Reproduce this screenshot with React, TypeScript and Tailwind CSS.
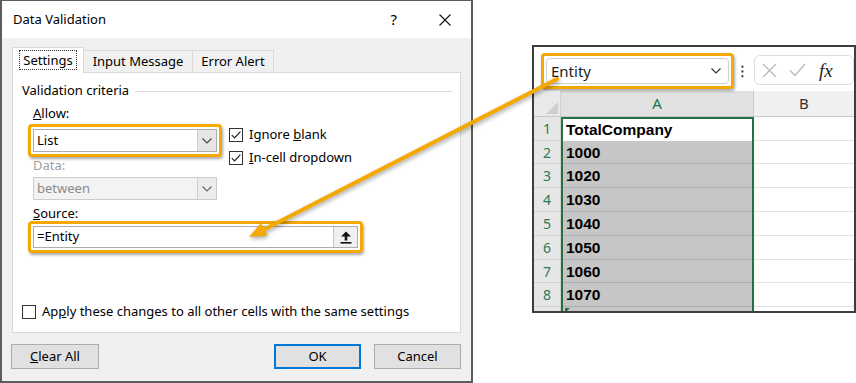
import React from "react";

const dlgFont = { fontFamily: "'Noto Sans', 'Open Sans', sans-serif" };

function Chevron({ color = "#444" }: { color?: string }) {
  return (
    <svg width="10" height="6" viewBox="0 0 10 6">
      <path d="M0.5 0.5 L5 5 L9.5 0.5" fill="none" stroke={color} strokeWidth="1.1" />
    </svg>
  );
}

function Check({ checked }: { checked: boolean }) {
  return (
    <span className="w-[14px] h-[14px] border border-[#333] bg-white flex items-center justify-center shrink-0">
      {checked && (
        <svg width="12" height="12" viewBox="0 0 12 12">
          <path d="M1.8 6.2 L4.6 9 L10.4 2.6" fill="none" stroke="#222" strokeWidth="1.2" />
        </svg>
      )}
    </span>
  );
}

function Highlight() {
  return (
    <span className="absolute -inset-[5px] rounded-[4px] border-[3px] border-[#f5a800] shadow-[1px_2px_3px_rgba(0,0,0,0.35)] pointer-events-none" />
  );
}

function Dialog() {
  return (
    <div
      className="w-[473px] h-[383px] shrink-0 flex flex-col border-t border-x-2 border-b-2 border-[#5c5c5c] bg-white text-[13px] text-black"
      style={dlgFont}
    >
      {/* title bar */}
      <div className="h-[37px] flex items-center pl-[11px] pr-[20px] bg-white">
        <span className="text-[13px]">Data Validation</span>
        <span className="ml-auto text-[15px] leading-none">?</span>
        <svg className="ml-[42px]" width="12" height="12" viewBox="0 0 12 12">
          <path d="M0.5 0.5 L11.5 11.5 M11.5 0.5 L0.5 11.5" stroke="#111" strokeWidth="1.1" />
        </svg>
      </div>
      {/* body */}
      <div className="flex-1 bg-[#f0f0f0] px-[10px] pt-[9px] flex flex-col">
        {/* tabs */}
        <div className="h-[25px] flex items-end">
          <div className="relative z-10 h-[26px] w-[72px] -mb-px bg-white border-t border-x border-[#d9d9d9] flex items-start justify-center pt-[2px]">
            <span className="border border-dotted border-[#333] px-[3px] h-[20px] leading-[18px]">Settings</span>
          </div>
          <div className="h-[22px] w-[109px] border-t border-r border-[#d9d9d9] flex items-center justify-center">
            Input Message
          </div>
          <div className="h-[22px] w-[81px] border-t border-r border-[#d9d9d9] flex items-center justify-center">
            Error Alert
          </div>
        </div>
        {/* panel */}
        <div className="w-[449px] h-[261px] bg-white border border-[#d9d9d9] flex flex-col">
          <div className="mt-[10px] ml-[9px] mr-[8px] h-[16px] flex items-center">
            <span>Validation criteria</span>
            <span className="flex-1 h-px bg-[#dcdcdc] ml-[6px]" />
          </div>
          <div className="flex mt-[6px] ml-[20px]">
            <div className="w-[184px] flex flex-col">
              <div className="h-[16px] leading-[16px]">
                <u>A</u>llow:
              </div>
              <div className="relative mt-[8px] h-[23px]">
                <Highlight />
                <div className="h-full border border-[#adadad] bg-white flex items-center">
                  <span className="pl-[3px] flex-1">List</span>
                  <span className="w-[19px] h-full bg-[#e6e6e6] border-l border-[#cfcfcf] flex items-center justify-center">
                    <Chevron />
                  </span>
                </div>
              </div>
              <div className="mt-[5px] h-[16px] leading-[16px] text-[#a0a0a0]">Data:</div>
              <div className="mt-[4px] h-[23px] border border-[#cccccc] bg-[#f3f3f3] flex items-center">
                <span className="pl-[3px] flex-1 text-[#8a8a8a]">between</span>
                <span className="w-[19px] h-full bg-[#ececec] border-l border-[#cfcfcf] flex items-center justify-center">
                  <Chevron color="#666" />
                </span>
              </div>
            </div>
            <div className="ml-[12px] flex flex-col">
              <div className="mt-[22px] h-[16px] flex items-center gap-[6px]">
                <Check checked />
                <span>
                  Ignore <u>b</u>lank
                </span>
              </div>
              <div className="mt-[7px] h-[16px] flex items-center gap-[6px]">
                <Check checked />
                <span>
                  <u>I</u>n-cell dropdown
                </span>
              </div>
            </div>
          </div>
          <div className="mt-[5px] ml-[20px] h-[16px] leading-[16px]">
            <u>S</u>ource:
          </div>
          <div className="relative mt-[5px] ml-[20px] w-[325px] h-[22px]">
            <Highlight />
            <div className="h-full border border-[#adadad] bg-white flex items-center">
              <span className="pl-[3px] flex-1">=Entity</span>
              <span className="w-[24px] h-[20px] bg-[#f0f0f0] border-l border-[#c4c4c4] flex items-center justify-center">
                <svg width="12" height="13" viewBox="0 0 12 13">
                  <path d="M6 0.5 L11 5.5 L7.3 5.5 L7.3 9.5 L4.7 9.5 L4.7 5.5 L1 5.5 Z" fill="#111" />
                  <rect x="0.5" y="11" width="11" height="1.6" fill="#111" />
                </svg>
              </span>
            </div>
          </div>
          <div className="mt-auto mb-[12px] ml-[9px] h-[16px] flex items-center gap-[6px]">
            <Check checked={false} />
            <span>
              Ap<u>p</u>ly these changes to all other cells with the same settings
            </span>
          </div>
        </div>
        {/* buttons */}
        <div className="mt-[11px] h-[25px] flex -ml-px">
          <button className="w-[88px] h-full bg-[#e1e1e1] border border-[#adadad] text-[13px]">
            <u>C</u>lear All
          </button>
          <button className="ml-auto w-[87px] h-full bg-[#e1e1e1] border-2 border-[#0078d7] text-[13px]">
            OK
          </button>
          <button className="ml-[13px] w-[87px] h-full bg-[#e1e1e1] border border-[#adadad] text-[13px]">
            Cancel
          </button>
        </div>
      </div>
    </div>
  );
}

const rowHeights = [24, 23, 24, 24, 24, 24, 23, 24];
const cellVals = ["TotalCompany", "1000", "1020", "1030", "1040", "1050", "1060", "1070"];

function Excel() {
  return (
    <div
      className="w-[324px] h-[268px] border-2 border-[#3d3d3d] bg-white flex flex-col overflow-hidden"
      style={dlgFont}
    >
      {/* formula bar */}
      <div className="h-[44px] flex items-start shrink-0">
        <div className="relative ml-[12px] mt-[11px] w-[193px] h-[26px]">
          <Highlight />
          <div className="h-full rounded-[4px] border border-[#d0d0d0] bg-white flex items-center pl-[4px] pr-[7px]">
            <span className="text-[15px] text-[#222] flex-1">Entity</span>
            <Chevron color="#333" />
          </div>
        </div>
        <svg className="ml-[12px] mt-[18px]" width="3" height="13" viewBox="0 0 3 13">
          <circle cx="1.5" cy="1.5" r="1.2" fill="#444" />
          <circle cx="1.5" cy="6.5" r="1.2" fill="#444" />
          <circle cx="1.5" cy="11.5" r="1.2" fill="#444" />
        </svg>
        <div className="ml-[10px] mt-[8px] w-[100px] h-[30px] shrink-0 rounded-[6px] border border-[#dedede] flex items-center pl-[7px]">
          <svg width="15" height="15" viewBox="0 0 15 15">
            <path d="M1 1 L14 14 M14 1 L1 14" stroke="#b8b8b8" strokeWidth="1.2" />
          </svg>
          <svg className="ml-[12px]" width="17" height="14" viewBox="0 0 17 14">
            <path d="M1 7.5 L6 12.5 L16 1" fill="none" stroke="#b8b8b8" strokeWidth="1.2" />
          </svg>
          <span
            className="ml-[13px] text-[19px] italic leading-none text-[#222]"
            style={{ fontFamily: "'Liberation Serif', serif" }}
          >
            fx
          </span>
        </div>
      </div>
      {/* column headers */}
      <div className="h-[26px] flex shrink-0 border-b border-[#c8c8c8]">
        <div className="w-[27px] bg-[#e9e9e9] border-r border-[#d0d0d0] relative">
          <svg className="absolute right-[2px] bottom-[2px]" width="12" height="12" viewBox="0 0 12 12">
            <path d="M12 0 L12 12 L0 12 Z" fill="#cfcfcf" />
          </svg>
        </div>
        <div className="w-[193px] bg-[#e1e1e1] border-r border-[#c8c8c8] flex items-center justify-center text-[15px] text-[#217346]">
          A
        </div>
        <div className="flex-1 bg-[#f0f0f0] flex items-center justify-center text-[15px] text-[#333]">B</div>
      </div>
      {/* rows */}
      {rowHeights.map((h, i) => (
        <div key={i} className="flex shrink-0" style={{ height: h }}>
          <div className="w-[27px] bg-[#e6e6e6] border-b border-r border-[#d0d0d0] flex items-center justify-center text-[14px] text-[#2a7b55]">
            {i + 1}
          </div>
          <div
            className={
              i === 0
                ? "w-[193px] bg-white border-x-2 border-t-2 border-[#217346] flex items-center pl-[3px]"
                : "w-[193px] bg-[#c6c6c6] border-x-2 border-[#217346] flex items-center pl-[3px] shadow-[inset_0_-1px_0_#a9aeb6]"
            }
          >
            <span
              className="text-[15.5px] font-bold text-black"
              style={{ fontFamily: "'Liberation Sans', Arial, sans-serif" }}
            >
              {cellVals[i]}
            </span>
          </div>
          <div className="flex-1 border-b border-[#e1e1e1]" />
        </div>
      ))}
      <div className="flex flex-1">
        <div className="w-[27px] bg-[#e6e6e6] border-r border-[#d0d0d0]" />
        <div className="w-[193px] bg-[#c6c6c6] border-x-2 border-[#217346] relative">
          <svg className="absolute left-[2px] top-[1px]" width="5" height="5" viewBox="0 0 5 5">
            <path d="M0 0 L5 0 L0 5 Z" fill="#217346" />
          </svg>
        </div>
        <div className="flex-1" />
      </div>
    </div>
  );
}

export default function App() {
  return (
    <div className="relative w-[856px] h-[383px] bg-white overflow-hidden flex items-start">
      <Dialog />
      <div className="ml-[59px] mt-[45px]">
        <Excel />
      </div>
      <svg
        className="absolute inset-0 pointer-events-none drop-shadow-[1px_2px_2px_rgba(0,0,0,0.35)]"
        width="856"
        height="383"
        viewBox="0 0 856 383"
      >
        <line x1="557" y1="79" x2="264" y2="229.5" stroke="#f5a800" strokeWidth="4" strokeLinecap="round" />
        <polygon points="249,237 267.3,235.4 260.9,223" fill="#f5a800" />
      </svg>
    </div>
  );
}
